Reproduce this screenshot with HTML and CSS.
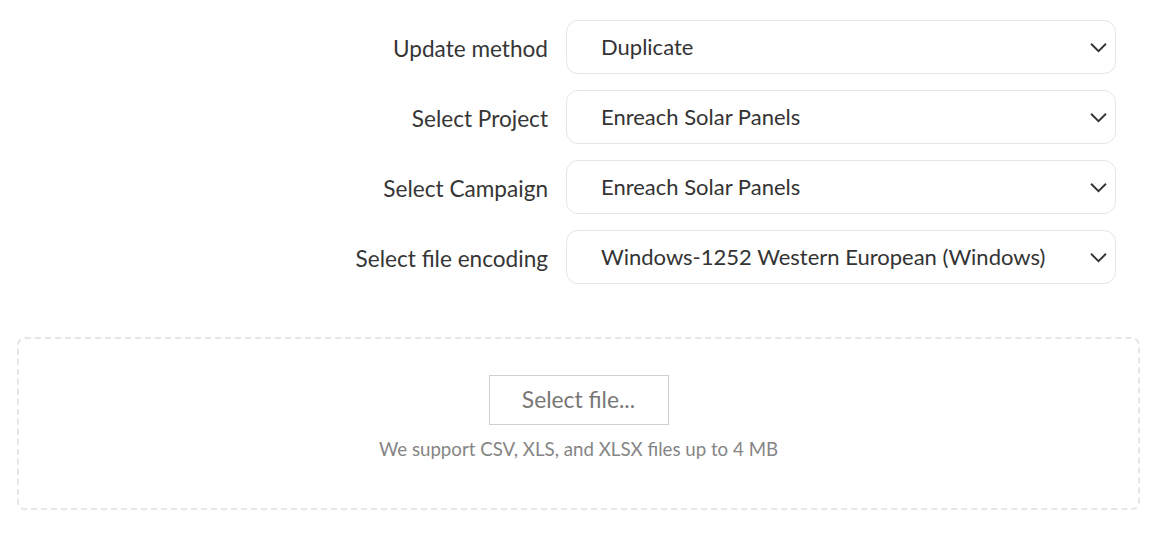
FILE: index.html
```html
<!DOCTYPE html>
<html>
<head>
<meta charset="utf-8">
<link rel="stylesheet" href="styles.css">
</head>
<body>
<div class="page">
  <div class="form">
    <div class="row">
      <label class="label">Update method</label>
      <div class="select"><span>Duplicate</span><svg class="chev" viewBox="0 0 16 10"><path d="M1 1.5 L8 8.5 L15 1.5" fill="none" stroke="#333" stroke-width="1.8"/></svg></div>
    </div>
    <div class="row">
      <label class="label">Select Project</label>
      <div class="select"><span>Enreach Solar Panels</span><svg class="chev" viewBox="0 0 16 10"><path d="M1 1.5 L8 8.5 L15 1.5" fill="none" stroke="#333" stroke-width="1.8"/></svg></div>
    </div>
    <div class="row">
      <label class="label">Select Campaign</label>
      <div class="select"><span>Enreach Solar Panels</span><svg class="chev" viewBox="0 0 16 10"><path d="M1 1.5 L8 8.5 L15 1.5" fill="none" stroke="#333" stroke-width="1.8"/></svg></div>
    </div>
    <div class="row">
      <label class="label">Select file encoding</label>
      <div class="select"><span>Windows-1252 Western European (Windows)</span><svg class="chev" viewBox="0 0 16 10"><path d="M1 1.5 L8 8.5 L15 1.5" fill="none" stroke="#333" stroke-width="1.8"/></svg></div>
    </div>
  </div>
  <div class="drop">
    <button class="file-btn">Select file...</button>
    <p class="hint">We support CSV, XLS, and XLSX files up to 4 MB</p>
  </div>
</div>
</body>
</html>
```
FILE: styles.css
```css
* { box-sizing: border-box; }
body {
  margin: 0;
  background: #fff;
  font-family: Lato, "Open Sans", sans-serif;
  color: #333;
}
.page {
  padding: 20px 26px 0 17px;
}
.form {
  display: flex;
  flex-direction: column;
  gap: 16px;
  padding-right: 24px;
}
.row {
  display: grid;
  grid-template-columns: 1fr 550px;
  column-gap: 18px;
  align-items: center;
}
.label {
  text-align: right;
  font-size: 22.6px;
  color: #363636;
  padding-top: 3px;
}
.select {
  height: 54px;
  border: 1px solid #e5e5e5;
  border-radius: 12px;
  display: flex;
  align-items: center;
  justify-content: space-between;
  padding: 0 7px 2px 34px;
  font-size: 22px;
  color: #333;
}
.chev {
  width: 17px;
  height: 11px;
  margin-right: 1px;
  margin-top: 2px;
}
.drop {
  margin-top: 53px;
  height: 173px;
  border: 2px dashed #e6e6e6;
  border-radius: 8px;
  display: flex;
  flex-direction: column;
  align-items: center;
  padding-top: 36px;
}
.file-btn {
  width: 180px;
  height: 50px;
  background: #fff;
  border: 1px solid #cfcfcf;
  font-family: inherit;
  font-size: 22.8px;
  color: #777;
  padding: 0 0 2px;
}
.hint {
  margin: 13px 0 0;
  font-size: 18.7px;
  color: #858585;
}
```
